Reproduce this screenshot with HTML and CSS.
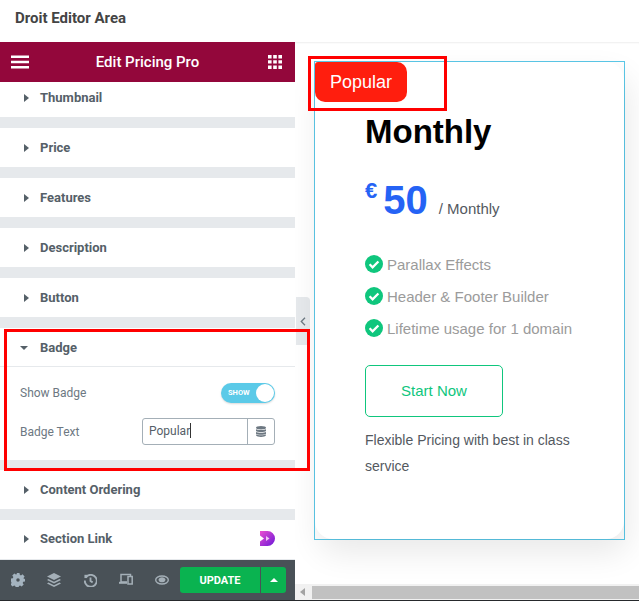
FILE: index.html
```html
<!DOCTYPE html>
<html lang="en">
  <head>
    <meta charset="UTF-8" />
    <meta name="viewport" content="width=device-width, initial-scale=1.0" />
    <title>Droit Editor Area</title>
    <link rel="stylesheet" href="styles.css">
  </head>
  <body>
    <div class="page-title">Droit Editor Area</div>
    <div class="editor">
      <aside class="panel">
        <div class="panel-header">
          <svg class="menu-icon" width="18" height="14" viewBox="0 0 18 14"><path d="M0 0.5h18v2.6H0zM0 5.7h18v2.6H0zM0 10.900h18v2.600H0z" fill="#fff"/></svg>
          <span class="panel-title">Edit Pricing Pro</span>
          <svg class="grid-icon" width="14" height="14" viewBox="0 0 14 14" fill="#fff"><path d="M0 0h3.6v3.4H0zM5.2 0h3.6v3.4H5.2zM10.4 0H14v3.4h-3.6zM0 5.2h3.6v3.4H0zM5.2 5.2h3.6v3.4H5.2zM10.4 5.2H14v3.4h-3.6zM0 10.4h3.6V14H0zM5.2 10.4h3.6V14H5.2zM10.4 10.4H14V14h-3.6z"/></svg>
        </div>
        <div class="panel-scroll">
          <div class="section first"><i class="arrow"></i>Thumbnail</div>
          <div class="section"><i class="arrow"></i>Price</div>
          <div class="section"><i class="arrow"></i>Features</div>
          <div class="section"><i class="arrow"></i>Description</div>
          <div class="section"><i class="arrow"></i>Button</div>
          <div class="section-open">
            <div class="section-head"><i class="arrow-down"></i>Badge</div>
            <div class="section-body">
              <div class="control">
                <span>Show Badge</span>
                <span class="switch"><span class="switch-label">SHOW</span><span class="switch-knob"></span></span>
              </div>
              <div class="control">
                <span>Badge Text</span>
                <span class="text-field">
                  <span class="text-value">Popular<span class="caret"></span></span>
                  <span class="text-db">
                    <svg width="10" height="11" viewBox="0 0 10 11" fill="#6d7882"><ellipse cx="5" cy="1.7" rx="5" ry="1.7"/><path d="M0 3.2c1 1 9 1 10 0v1.7c-1 1.5-9 1.5-10 0zM0 6c1 1 9 1 10 0v1.7c-1 1.500-9 1.500-10 0zM0 8.600c1 1 9 1 10 0v.7c-1 2.200-9 2.200-10 0z"/></svg>
                  </span>
                </span>
              </div>
            </div>
          </div>
          <div class="section"><i class="arrow"></i>Content Ordering</div>
          <div class="section last">
            <i class="arrow"></i>Section Link
            <svg class="droit-logo" width="15" height="15" viewBox="0 0 15 15">
              <defs><linearGradient id="dg" x1="0" y1="0" x2="1" y2="1"><stop offset="0" stop-color="#ec4fd0"/><stop offset="1" stop-color="#6a17d8"/></linearGradient></defs>
              <path d="M0 0H7.500A7.500 7.500 0 0 1 7.500 15H0V10.500L4 7.500 0 4.500z" fill="url(#dg)"/>
              <path d="M6 5L9.500 7.500 6 10z" fill="#f2c6f4"/>
            </svg>
          </div>
        </div>
        <div class="panel-footer">
          <span class="tool"><svg width="14" height="14" viewBox="0 0 24 24" fill="#a4b3bf"><path fill-rule="evenodd" d="M9.500 0h5l.6 3.200 2 .9 2.700-1.800 3.500 3.500-1.800 2.700.9 2L24 9.500v5l-3.100.6-.9 2 1.800 2.700-3.500 3.500-2.700-1.800-2 .9-.6 3.100h-5l-.6-3.100-2-.9-2.700 1.800-3.500-3.500 1.800-2.700-.9-2L0 14.500v-5l3.100-.6.9-2-1.800-2.700 3.500-3.500 2.700 1.800 2-.9zM12 9a3 3 0 1 0 0 6 3 3 0 0 0 0-6z"/></svg></span>
          <span class="tool"><svg width="14" height="14" viewBox="0 0 24 24" fill="#a4afb7"><path d="M12 0l12 6-12 6L0 6z"/><path d="M2.500 10.200L12 15l9.500-4.800L24 12l-12 6-12-6z"/><path d="M2.500 16.200L12 21l9.500-4.800L24 18l-12 6-12-6z"/></svg></span>
          <span class="tool"><svg width="13" height="13" viewBox="0 0 24 24" fill="none" stroke="#a4afb7" stroke-width="3.400"><path d="M4 5.500A11 11 0 1 1 1.500 12"/><path d="M12 6.500V13l4 2.500"/><path d="M0.800 1.500h5v6h-5z" fill="#a4afb7" stroke="none"/></svg></span>
          <span class="tool tool-up"><svg width="14" height="12" viewBox="0 0 14 12" fill="none" stroke="#a4afb7" stroke-width="1.500"><path d="M8 9H2V1.500h9.500V3"/><path d="M0 9.800h8" stroke-width="2"/><rect x="9" y="3.500" width="4.200" height="7.500"/></svg></span>
          <span class="tool"><svg width="14" height="10" viewBox="0 0 24 16"><ellipse cx="12" cy="8" rx="10.800" ry="6.800" fill="none" stroke="#a4afb7" stroke-width="2.400"/><path d="M6 6.500A6.500 5 0 0 1 18 6.500C18 10.500 15 12 12 12S6 10.500 6 6.500z" fill="#a4afb7"/></svg></span>
          <div class="update">
            <span class="update-main">UPDATE</span>
            <span class="update-more"><i class="arrow-up"></i></span>
          </div>
        </div>
      </aside>
      <main class="canvas">
        <div class="canvas-view">
          <span class="panel-toggle">
            <svg width="6" height="9" viewBox="0 0 6 9" fill="none" stroke="#6d7882" stroke-width="1.300"><path d="M5 .8L1.300 4.500 5 8.200"/></svg>
          </span>
          <div class="card">
            <div class="card-inner">
              <div class="badge">Popular</div>
              <h2 class="plan">Monthly</h2>
              <div class="price">
                <span class="currency">€</span>
                <span class="amount">50</span>
                <span class="period">/ Monthly</span>
              </div>
              <ul class="features">
                <li><svg class="check" width="18" height="18" viewBox="0 0 18 18"><circle cx="9" cy="9" r="9" fill="#0fc67d"/><path d="M4.600 9.300l3 3 5.800-5.800" fill="none" stroke="#fff" stroke-width="2.300"/></svg>Parallax Effects</li>
                <li><svg class="check" width="18" height="18" viewBox="0 0 18 18"><circle cx="9" cy="9" r="9" fill="#0fc67d"/><path d="M4.600 9.300l3 3 5.800-5.800" fill="none" stroke="#fff" stroke-width="2.300"/></svg>Header &amp; Footer Builder</li>
                <li><svg class="check" width="18" height="18" viewBox="0 0 18 18"><circle cx="9" cy="9" r="9" fill="#0fc67d"/><path d="M4.600 9.300l3 3 5.800-5.800" fill="none" stroke="#fff" stroke-width="2.300"/></svg>Lifetime usage for 1 domain</li>
              </ul>
              <a class="start-btn">Start Now</a>
              <p class="note">Flexible Pricing with best in class service</p>
            </div>
          </div>
        </div>
        <div class="h-scroll">
          <i class="scroll-left"></i>
          <span class="scroll-thumb"></span>
        </div>
      </main>
    </div>
    <div class="page-edge"></div>
    <div class="mark mark-badge"></div>
    <div class="mark mark-panel"></div>
  </body>
</html>
```

FILE: styles.css
```css
* {
  box-sizing: border-box;
}
html,
body {
  height: 100%;
}
body {
  margin: 0;
  background: #fff;
  font-family: "Roboto", "Liberation Sans", sans-serif;
  display: flex;
  flex-direction: column;
  overflow: hidden;
}
.page-title {
  height: 42px;
  flex: none;
  padding: 10px 15px 0;
  font-size: 15px;
  line-height: 17px;
  font-weight: 700;
  color: #444;
}
.editor {
  display: flex;
  height: 558px;
  flex: none;
}
.page-edge {
  height: 1px;
  flex: none;
  background: #26292c;
}

/* left panel */
.panel {
  width: 295px;
  flex: none;
  display: flex;
  flex-direction: column;
  background: #e6e9ec;
}
.panel-header {
  height: 40px;
  flex: none;
  background: #93073b;
  color: #fff;
  display: flex;
  align-items: center;
  justify-content: space-between;
  padding: 0 13px 0 11px;
}
.panel-title {
  font-size: 15px;
  font-weight: 500;
  margin-right: 2px;
}
.panel-scroll {
  flex: 1;
}
.section {
  height: 39px;
  background: #fff;
  margin-bottom: 11px;
  display: flex;
  align-items: center;
  padding-left: 24px;
  font-size: 13px;
  font-weight: 700;
  color: #556068;
}
.section.first {
  height: 35px;
  padding-bottom: 4px;
}
.section.last {
  margin-bottom: 0;
  height: 40px;
  padding-bottom: 2px;
  border-bottom: 1px solid #e6e9ec;
}
.arrow {
  width: 0;
  height: 0;
  border-left: 5px solid #556068;
  border-top: 4px solid transparent;
  border-bottom: 4px solid transparent;
  margin-right: 11px;
}
.arrow-down {
  width: 0;
  height: 0;
  border-top: 4px solid #556068;
  border-left: 4px solid transparent;
  border-right: 4px solid transparent;
  margin: 0 12px 0 -4px;
}
.droit-logo {
  margin-left: auto;
  margin-right: 20px;
}
.section-open {
  background: #fff;
  margin-bottom: 10px;
}
.section-head {
  height: 39px;
  display: flex;
  align-items: center;
  padding-left: 24px;
  padding-top: 1px;
  font-size: 13px;
  font-weight: 700;
  color: #556068;
  border-bottom: 1px solid #e6e9ec;
}
.section-body {
  padding: 6px 20px 0;
  height: 93px;
  font-size: 12px;
  color: #6d7882;
}
.control {
  display: flex;
  align-items: center;
  justify-content: space-between;
  height: 39px;
}
.switch {
  width: 54px;
  height: 20px;
  border-radius: 10px;
  background: #5bcae8;
  position: relative;
  display: block;
  box-shadow: 0 1px 2px rgba(0, 0, 0, 0.15);
}
.switch-label {
  position: absolute;
  left: 7px;
  top: 5px;
  font-size: 7.5px;
  line-height: 10px;
  font-weight: 700;
  color: #fff;
}
.switch-knob {
  position: absolute;
  right: 1px;
  top: 1px;
  width: 18px;
  height: 18px;
  border-radius: 50%;
  background: #fff;
}
.text-field {
  width: 133px;
  height: 27px;
  display: flex;
  border: 1px solid #a4afb7;
  border-radius: 3px;
}
.text-value {
  flex: 1;
  padding-left: 6px;
  line-height: 25px;
  font-size: 12px;
  color: #556068;
  border-right: 1px solid #a4afb7;
}
.caret {
  display: inline-block;
  width: 1px;
  height: 15px;
  background: #333;
  vertical-align: -3px;
}
.text-db {
  width: 26px;
  flex: none;
  display: flex;
  align-items: center;
  justify-content: center;
}
.panel-footer {
  height: 40px;
  flex: none;
  background: #495157;
  display: flex;
  align-items: center;
}
.tool {
  width: 36px;
  flex: none;
  display: flex;
  justify-content: center;
}
.tool-up {
  margin-top: -2px;
}
.update {
  display: flex;
  height: 26px;
  width: 106px;
  border-radius: 3px;
  overflow: hidden;
  color: #fff;
  font-size: 11px;
  font-weight: 700;
}
.update-main {
  flex: 1;
  background: #0ab350;
  display: flex;
  align-items: center;
  justify-content: center;
}
.update-more {
  width: 25px;
  margin-left: 1px;
  background: #0ab350;
  display: flex;
  align-items: center;
  justify-content: center;
}
.arrow-up {
  width: 0;
  height: 0;
  border-bottom: 4px solid #fff;
  border-left: 4px solid transparent;
  border-right: 4px solid transparent;
}

/* preview side */
.canvas {
  flex: 1;
  min-width: 0;
  display: flex;
  flex-direction: column;
  box-shadow: inset 0 2px 2px -1px #eee;
}
.canvas-view {
  flex: 1;
  padding: 19px 14px 0 19px;
  position: relative;
  overflow: hidden;
}
.panel-toggle {
  position: absolute;
  left: 1px;
  top: 255px;
  width: 14px;
  height: 48px;
  background: #e6e9ec;
  border-radius: 0 4px 4px 0;
  display: flex;
  align-items: center;
  justify-content: center;
}
.card {
  height: 479px;
  border: 1px solid #5bc8e8;
}
.card-inner {
  position: relative;
  height: 100%;
  padding: 50px 0 0 50px;
  background: #fff;
  border-radius: 18px;
  box-shadow: 4px 14px 32px rgba(0, 0, 0, 0.09);
}
.badge {
  position: absolute;
  left: 0;
  top: 0;
  width: 92px;
  height: 40px;
  background: #ff1e0e;
  color: #fff;
  border-radius: 3px 10px 10px 10px;
  font-family: "Liberation Sans", sans-serif;
  font-size: 18px;
  line-height: 40px;
  text-align: center;
}
.plan {
  margin: 0;
  font-family: "Liberation Sans", sans-serif;
  font-size: 33px;
  line-height: 40px;
  font-weight: 700;
  color: #000;
}
.price {
  display: flex;
  align-items: baseline;
  margin-top: 25px;
  height: 46px;
  font-family: "Liberation Sans", sans-serif;
}
.currency {
  font-size: 22px;
  font-weight: 700;
  color: #2563f5;
  align-self: flex-start;
  line-height: 24px;
  margin: 2px 6px 0 0;
}
.amount {
  font-size: 40px;
  line-height: 46px;
  font-weight: 700;
  color: #2563f5;
  margin-right: 11px;
}
.period {
  font-size: 15px;
  color: #54595f;
}
.features {
  list-style: none;
  margin: 25px 0 0;
  padding: 0;
  font-family: "Liberation Sans", sans-serif;
  font-size: 15px;
  color: #9b9b9b;
}
.features li {
  display: flex;
  align-items: center;
  height: 32px;
}
.check {
  margin-right: 4px;
  flex: none;
}
.start-btn {
  display: flex;
  align-items: center;
  justify-content: center;
  width: 138px;
  height: 52px;
  margin-top: 21px;
  padding-bottom: 2px;
  border: 1px solid #0fc67d;
  border-radius: 5px;
  color: #0fc67d;
  font-family: "Liberation Sans", sans-serif;
  font-size: 15px;
}
.note {
  margin: 10px 0 0;
  width: 220px;
  font-family: "Liberation Sans", sans-serif;
  font-size: 14px;
  line-height: 26px;
  color: #54595f;
}
.h-scroll {
  height: 16px;
  flex: none;
  background: #f1f1f1;
  display: flex;
  align-items: center;
}
.scroll-left {
  width: 0;
  height: 0;
  border-right: 5px solid #a3a3a3;
  border-top: 4px solid transparent;
  border-bottom: 4px solid transparent;
  margin: 0 7px 0 5px;
}
.scroll-thumb {
  flex: 1;
  height: 13px;
  background: #c1c1c1;
}

/* red callouts over the screenshot */
.mark {
  position: absolute;
  border: 3px solid #f00;
}
.mark-badge {
  left: 308px;
  top: 56px;
  width: 139px;
  height: 55px;
}
.mark-panel {
  left: 4px;
  top: 329px;
  width: 306px;
  height: 142px;
}
```
